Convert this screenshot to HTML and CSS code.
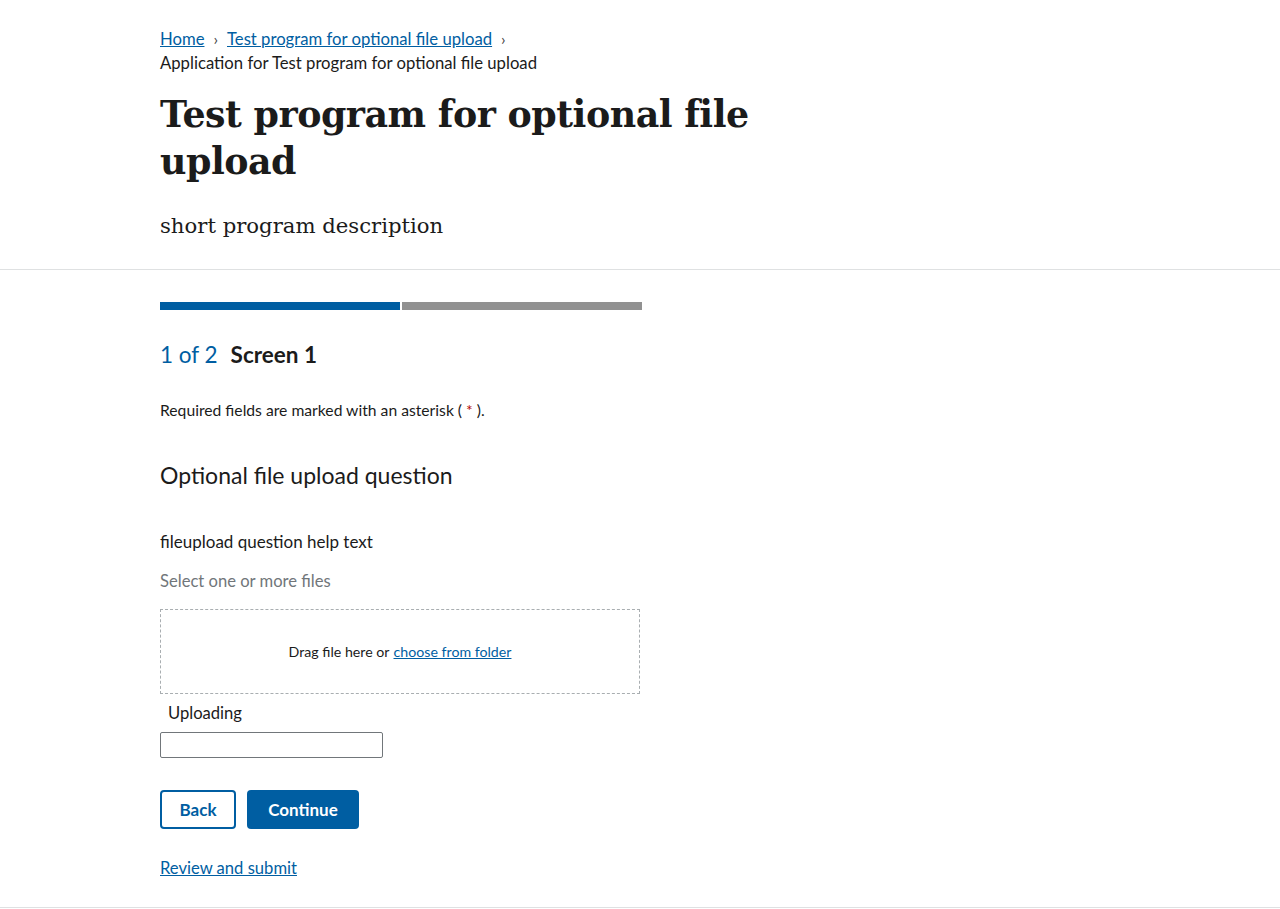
FILE: index.html
```html
<!DOCTYPE html>
<html lang="en">
<head>
<meta charset="utf-8">
<title>Test program for optional file upload</title>
<link rel="stylesheet" href="styles.css">
</head>
<body>
<header class="hero">
  <div class="wrap">
    <nav class="crumbs">
      <a href="#">Home</a><span class="sep">›</span><a href="#">Test program for optional file upload</a><span class="sep">›</span>
      <div class="current">Application for Test program for optional file upload</div>
    </nav>
    <h1 class="title">Test program for optional file upload</h1>
    <p class="desc">short program description</p>
  </div>
</header>
<main class="main">
  <div class="wrap form">
    <div class="progress"><span class="seg done"></span><span class="seg"></span></div>
    <h2 class="step"><span class="count">1 of 2</span><span class="name">Screen 1</span></h2>
    <p class="req">Required fields are marked with an asterisk ( <span class="star">*</span> ).</p>
    <h3 class="question">Optional file upload question</h3>
    <p class="help">fileupload question help text</p>
    <p class="hint">Select one or more files</p>
    <div class="drop">Drag file here or <a href="#">choose from folder</a></div>
    <div class="uploading">Uploading</div>
    <div class="field"></div>
    <div class="actions">
      <button class="btn outline">Back</button>
      <button class="btn primary">Continue</button>
    </div>
    <a class="review" href="#">Review and submit</a>
  </div>
</main>
</body>
</html>
```
FILE: styles.css
```css
* { box-sizing: border-box; }
body {
  margin: 0;
  font-family: "Lato", "Open Sans", sans-serif;
  color: #1b1b1b;
  background: #fff;
}
a { color: #005ea2; }
.wrap { width: 960px; margin: 0 auto; }
.hero { border-bottom: 1px solid #dfe1e2; padding: 28px 0 29px; }
.crumbs { font-size: 16.7px; line-height: 22px; }
.crumbs .sep { display: inline-block; margin: 0 9px; color: #444; font-size: 16px; }
.crumbs .current { margin-top: 2px; }
.title {
  font-family: "DejaVu Serif", serif;
  font-weight: bold;
  font-size: 36.4px;
  line-height: 47px;
  margin: 17px 0 0;
  width: 620px;
  letter-spacing: -0.5px;
}
.desc {
  font-family: "DejaVu Serif", serif;
  font-size: 21.2px;
  margin: 27px 0 0;
  line-height: 28px;
}
.main { border-bottom: 1px solid #dfe1e2; padding: 32px 0 28px; }
.progress { display: flex; gap: 2px; width: 482px; }
.seg { flex: 1; height: 8px; background: #919191; }
.seg.done { background: #005ea2; }
.step { margin: 30px 0 0; font-size: 22.5px; line-height: 30px; display: flex; gap: 13px; align-items: baseline; }
.step .count { color: #005ea2; font-weight: normal; }
.step .name { font-weight: bold; }
.req { font-size: 15.7px; margin: 29px 0 0; line-height: 22px; }
.star { color: #b50909; }
.question { font-size: 23px; font-weight: normal; margin: 39px 0 0; line-height: 30px; }
.help { font-size: 17px; margin: 41px 0 0; line-height: 22px; }
.hint { font-size: 16.6px; margin: 17px 0 0; color: #71767a; line-height: 22px; }
.drop {
  margin-top: 17px;
  width: 480px;
  height: 85px;
  border: 1px dashed #a9aeb1;
  display: flex;
  align-items: center;
  justify-content: center;
  font-size: 14.2px;
  gap: 4px;
}
.uploading { font-size: 16.6px; margin: 8px 0 0 8px; line-height: 22px; }
.field { margin-top: 8px; width: 223px; height: 26px; border: 1px solid #71767a; border-radius: 2px; }
.actions { display: flex; gap: 11px; margin-top: 32px; }
.btn {
  font-family: inherit;
  font-size: 17px;
  font-weight: bold;
  height: 39px;
  border-radius: 4px;
  padding: 0;
  cursor: pointer;
}
.btn.outline { background: #fff; color: #005ea2; border: 2px solid #005ea2; width: 76px; }
.btn.primary { background: #005ea2; color: #fff; border: 0; width: 112px; }
.review { display: inline-block; margin-top: 28px; font-size: 16.6px; line-height: 22px; }
```
